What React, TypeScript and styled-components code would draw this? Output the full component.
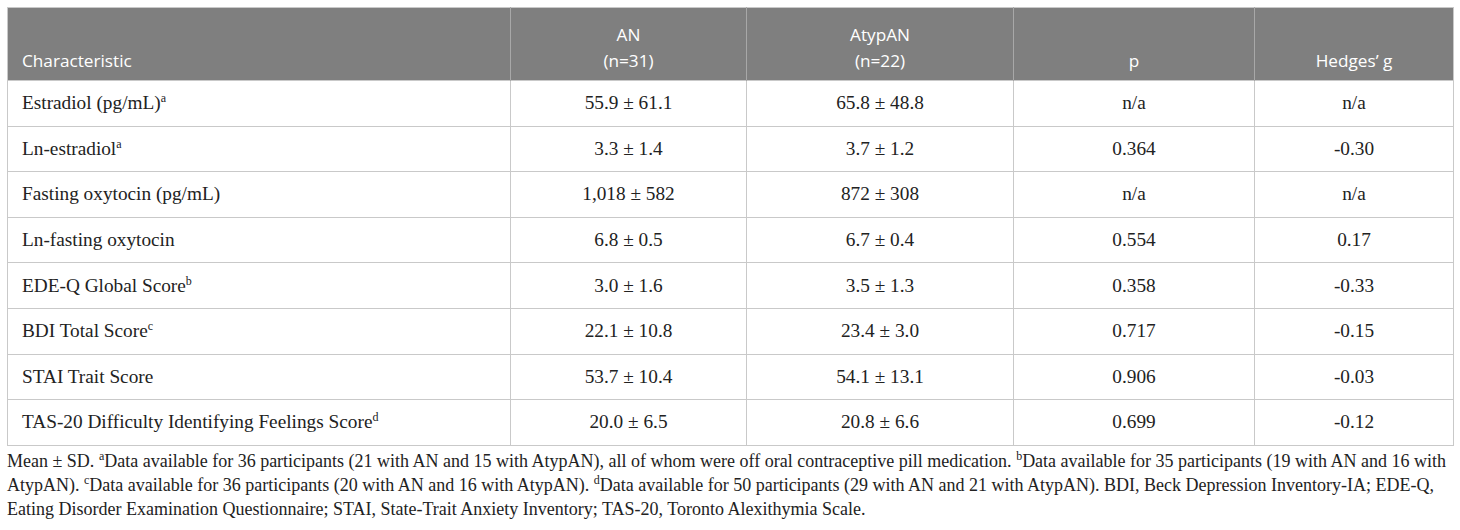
import styled, { createGlobalStyle } from "styled-components";

const GlobalStyle = createGlobalStyle`
  body {
    margin: 0;
    background: #ffffff;
  }
`;

const Page = styled.div`
  padding: 7px 7px 0 7px;
  width: 1446px;
`;

const Table = styled.table`
  width: 1446px;
  border-collapse: collapse;
  table-layout: fixed;
  border: 1px solid #c9c9c9;
`;

const HeadCell = styled.th<{ $align?: "left" | "center" }>`
  background: #7f7f7f;
  color: #ffffff;
  font-family: "Open Sans", "Liberation Sans", sans-serif;
  font-weight: 400;
  font-size: 17.2px;
  line-height: 26px;
  height: 73px;
  padding: 0 14px 6px 14px;
  box-sizing: border-box;
  vertical-align: bottom;
  text-align: ${(p) => p.$align ?? "center"};
  border-left: 1px solid #a8a8a8;
  &:first-child {
    border-left: none;
  }
`;

const Row = styled.tr`
  border-top: 1px solid #c9c9c9;
`;

const Cell = styled.td<{ $align?: "left" | "center" }>`
  font-family: "Liberation Serif", "Times New Roman", serif;
  font-size: 19.3px;
  color: #222222;
  height: 45.6px;
  padding: 0 14px;
  box-sizing: border-box;
  text-align: ${(p) => p.$align ?? "center"};
  vertical-align: middle;
  border-left: 1px solid #c9c9c9;
`;

const Sup = styled.sup`
  font-size: 12px;
  line-height: 0;
  vertical-align: 7px;
`;

const Note = styled.p`
  margin: 3px 0 0 0;
  font-family: "Liberation Serif", "Times New Roman", serif;
  font-size: 18px;
  line-height: 24px;
  color: #222222;
`;

type RowData = {
  name: string;
  sup?: string;
  an: string;
  atyp: string;
  p: string;
  g: string;
};

const rows: RowData[] = [
  { name: "Estradiol (pg/mL)", sup: "a", an: "55.9 ± 61.1", atyp: "65.8 ± 48.8", p: "n/a", g: "n/a" },
  { name: "Ln-estradiol", sup: "a", an: "3.3 ± 1.4", atyp: "3.7 ± 1.2", p: "0.364", g: "-0.30" },
  { name: "Fasting oxytocin (pg/mL)", an: "1,018 ± 582", atyp: "872 ± 308", p: "n/a", g: "n/a" },
  { name: "Ln-fasting oxytocin", an: "6.8 ± 0.5", atyp: "6.7 ± 0.4", p: "0.554", g: "0.17" },
  { name: "EDE-Q Global Score", sup: "b", an: "3.0 ± 1.6", atyp: "3.5 ± 1.3", p: "0.358", g: "-0.33" },
  { name: "BDI Total Score", sup: "c", an: "22.1 ± 10.8", atyp: "23.4 ± 3.0", p: "0.717", g: "-0.15" },
  { name: "STAI Trait Score", an: "53.7 ± 10.4", atyp: "54.1 ± 13.1", p: "0.906", g: "-0.03" },
  { name: "TAS-20 Difficulty Identifying Feelings Score", sup: "d", an: "20.0 ± 6.5", atyp: "20.8 ± 6.6", p: "0.699", g: "-0.12" },
];

export default function App() {
  return (
    <>
      <GlobalStyle />
      <Page>
        <Table>
          <colgroup>
            <col style={{ width: 503 }} />
            <col style={{ width: 236 }} />
            <col style={{ width: 267 }} />
            <col style={{ width: 241 }} />
            <col style={{ width: 199 }} />
          </colgroup>
          <thead>
            <tr>
              <HeadCell $align="left">Characteristic</HeadCell>
              <HeadCell>
                AN
                <br />
                (n=31)
              </HeadCell>
              <HeadCell>
                AtypAN
                <br />
                (n=22)
              </HeadCell>
              <HeadCell>p</HeadCell>
              <HeadCell>Hedges’ g</HeadCell>
            </tr>
          </thead>
          <tbody>
            {rows.map((r) => (
              <Row key={r.name}>
                <Cell $align="left">
                  {r.name}
                  {r.sup && <Sup>{r.sup}</Sup>}
                </Cell>
                <Cell>{r.an}</Cell>
                <Cell>{r.atyp}</Cell>
                <Cell>{r.p}</Cell>
                <Cell>{r.g}</Cell>
              </Row>
            ))}
          </tbody>
        </Table>
        <Note>
          Mean ± SD. <Sup>a</Sup>Data available for 36 participants (21 with AN and 15 with AtypAN), all of whom
          were off oral contraceptive pill medication. <Sup>b</Sup>Data available for 35 participants (19 with AN
          and 16 with AtypAN). <Sup>c</Sup>Data available for 36 participants (20 with AN and 16 with AtypAN).{" "}
          <Sup>d</Sup>Data available for 50 participants (29 with AN and 21 with AtypAN). BDI, Beck Depression
          Inventory-IA; EDE-Q, Eating Disorder Examination Questionnaire; STAI, State-Trait Anxiety Inventory;
          TAS-20, Toronto Alexithymia Scale.
        </Note>
      </Page>
    </>
  );
}
